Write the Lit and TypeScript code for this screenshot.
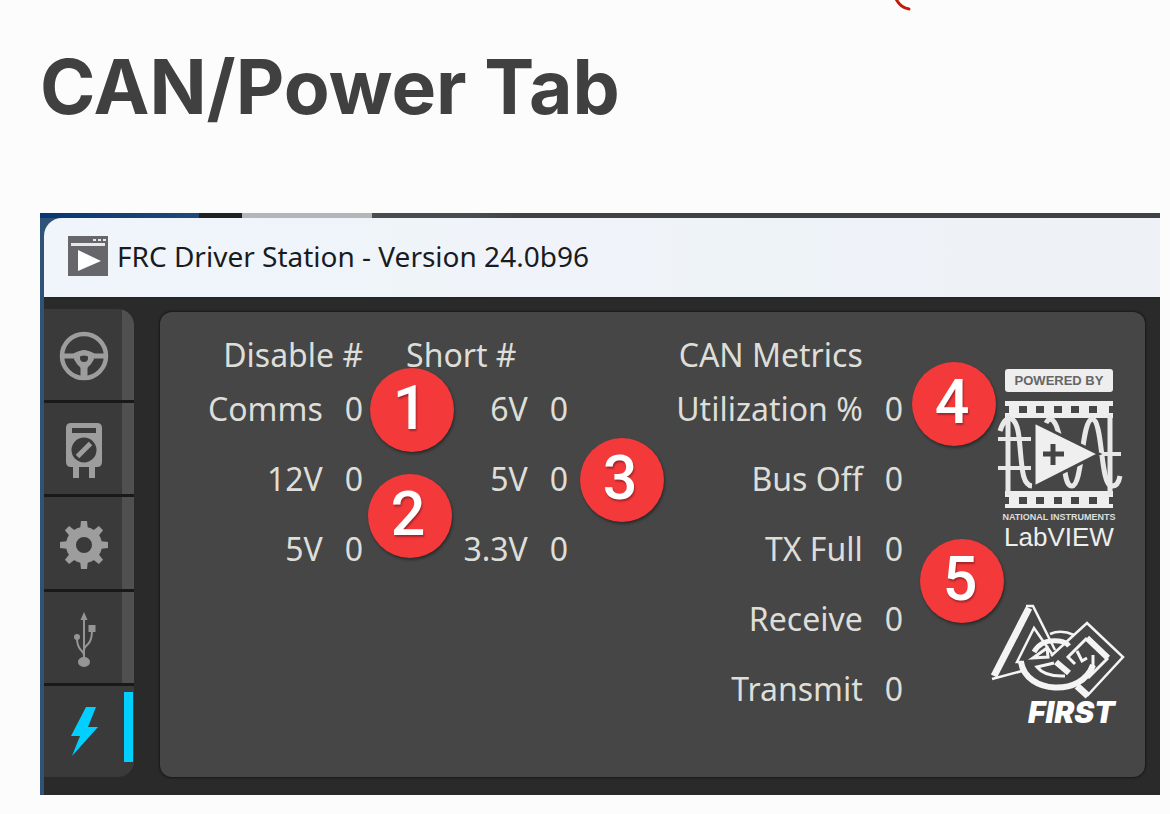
import { LitElement, html, css, svg } from "lit";
import { customElement } from "lit/decorators.js";

type Row = [string, number];

const disableRows: Row[] = [["Comms", 0], ["12V", 0], ["5V", 0]];
const shortRows: Row[] = [["6V", 0], ["5V", 0], ["3.3V", 0]];
const canRows: Row[] = [["Utilization %", 0], ["Bus Off", 0], ["TX Full", 0], ["Receive", 0], ["Transmit", 0]];

const gearTeeth = [0, 45, 90, 135, 180, 225, 270, 315];
const filmHoles = [18, 35, 53, 70, 88];

const tabs = [
  {
    name: "Operation",
    icon: svg`<g fill="none" stroke="#9d9d9d">
      <circle cx="25" cy="28" r="22" stroke-width="4.5"/>
      <circle cx="25" cy="30" r="6" stroke-width="4"/>
      <path d="M4 28H15Q25 22 35 28H46" stroke-width="5"/>
      <path d="M25 36V48" stroke-width="7"/>
      <path d="M16 30Q19 36 23 39M34 30Q31 36 27 39" stroke-width="3"/></g>`,
  },
  {
    name: "Diagnostics",
    icon: svg`<path fill="#9d9d9d" fill-rule="evenodd" d="M12 1H38Q43 1 43 6V40Q43 45 38 45H36V56H30V45H20V56H14V45H12Q7 45 7 40V6Q7 1 12 1ZM13 6V11H37V6ZM25 15.500A12.500 12.500 0 1 0 25 40.500A12.500 12.500 0 1 0 25 15.500Z"/>
      <path d="M18.500 34.500L31.500 21.500" stroke="#9d9d9d" stroke-width="5"/>`,
  },
  {
    name: "Setup",
    icon: svg`<circle cx="25" cy="28" r="13" fill="none" stroke="#9d9d9d" stroke-width="10"/>
      ${gearTeeth.map((a) => svg`<path d="M21 13L22 4H28L29 13Z" fill="#9d9d9d" transform="rotate(${a} 25 28)"/>`)}`,
  },
  {
    name: "USB Devices",
    icon: svg`<g fill="none" stroke="#959595" stroke-width="2"><path d="M25 50V7"/><path d="M25 45C25 38 18 41 18 27M25 39C25 33 33 36 33 19"/></g>
      <g fill="#959595"><path d="M25 1L28.500 9H21.500Z"/><ellipse cx="25" cy="51" rx="6" ry="5"/><circle cx="18" cy="26" r="3"/><path d="M29.500 14H36.500V21H29.500Z"/></g>`,
  },
  {
    name: "CAN/Power",
    icon: svg`<path fill="#00cfff" d="M27 2H37L29 22H39L13 51L21 31H12Z"/>`,
  },
];

@customElement("app-root")
export class AppRoot extends LitElement {
  static styles = css`
    :host { display: block; min-height: 100vh; box-sizing: border-box; padding: 40px 10px 19px 40px; background: #fcfcfc; position: relative; overflow: hidden; }
    h1 { margin: 0 0 80px; font: 700 75px/93px Inter, sans-serif; color: #404040; }
    .mark { position: absolute; top: 0; left: 894px; width: 20px; height: 12px; }
    .window { background: linear-gradient(90deg, #2e5378, #2b2b2b); padding-left: 4px; }
    .behind { height: 5px; margin-left: -4px; background: linear-gradient(90deg, #083672 0, #1d4a78 159px, #202020 159px 202px, #b4b7ba 202px 332px, #4a4d4f 332px 430px, #404244 480px); }
    .titlebar { display: flex; align-items: center; gap: 9px; height: 79px; box-sizing: border-box; padding: 0 24px 4px; background: linear-gradient(90deg, #f0f5fb, #eef2f7); border-radius: 18px 0 0 0; font: 400 28px/38px "Noto Sans", sans-serif; color: #191b1e; white-space: nowrap; }
    .appicon { width: 40px; height: 40px; flex: none; }
    .body { display: flex; gap: 26px; padding: 10px 15px 18px 0; background: #2a2a2a; border-top: 2px solid #242628; }
    .tabs { display: flex; flex-direction: column; gap: 3px; flex: none; width: 90px; background: #191919; border-radius: 0 16px 16px 0; overflow: hidden; }
    .tab { flex: 1; display: flex; align-items: center; border: 0; margin: 0; padding: 5px 0 0 15px; background: #3a3a3a; border-right: 12px solid #505050; }
    .tab svg { width: 50px; height: 58px; }
    .active { border-right-color: #3a3a3a; position: relative; }
    .active::after { content: ""; position: absolute; right: -11px; top: 6px; bottom: 15px; width: 9px; background: #00cfff; }
    .panel { flex: 1; position: relative; display: flex; align-items: flex-start; box-sizing: border-box; min-height: 465px; margin-top: 3px; padding: 24px 18px 24px 48px; background: #464646; border-radius: 12px; box-shadow: 0 0 2px 1px #181818; }
    table { border-collapse: collapse; flex: none; font: 400 32px/38px "Noto Sans", sans-serif; color: #deded9; }
    th, td { padding: 0; font-weight: 400; text-align: right; white-space: nowrap; height: 70px; }
    thead th { height: 38px; }
    td { padding-left: 22px; width: 18px; }
    .disable { width: 155px; margin-right: 43px; }
    .short { width: 162px; margin-right: 101px; }
    .short thead th { text-align: left; }
    .can { width: 234px; }
    .logos { display: flex; flex-direction: column; gap: 49px; margin: 29px 0 0 auto; flex: none; width: 138px; }
    .logos svg { display: block; width: 138px; }
    .badge { position: absolute; width: 84px; height: 84px; border-radius: 50%; background: #f4393b; box-shadow: 1px 2px 3px #0006; color: #fff; font: 500 61px/80px Roboto, sans-serif; text-align: center; text-indent: -4px; text-shadow: 1px 2px 2px #0005; }
    .b1 { left: 210px; top: 56px; }
    .b2 { left: 208px; top: 162px; }
    .b3 { left: 420px; top: 126px; }
    .b4 { left: 752px; top: 50px; }
    .b5 { left: 760px; top: 227px; }
    .powered { font: 700 13px "Liberation Sans", sans-serif; }
    .maker { font: 700 9px "Liberation Sans", sans-serif; }
    .product { font: 400 26px "Liberation Sans", sans-serif; }
    .first { font: italic 900 30px Inter, sans-serif; }
  `;

  private metrics(name: string, title: string, rows: Row[], span: number) {
    return html`<table class=${name}>
      <thead><tr><th scope="col" colspan=${span}>${title}</th></tr></thead>
      <tbody>${rows.map(([label, value]) => html`<tr><th scope="row">${label}</th><td>${value}</td></tr>`)}</tbody>
    </table>`;
  }

  render() {
    return html`
      <svg class="mark" viewBox="0 0 20 12" aria-hidden="true"><path d="M1-3Q6 8 15 9" fill="none" stroke="#c41a0c" stroke-width="3" stroke-linecap="round"/></svg>
      <h1>CAN/Power Tab</h1>
      <section class="window">
        <div class="behind"></div>
        <header class="titlebar">
          <svg class="appicon" viewBox="0 0 40 40" aria-hidden="true"><path d="M0 0H40V40H0Z" fill="#67676b"/><path d="M3 7H37V10H3ZM25 3H28V5H25ZM30 3H33V5H30ZM35 3H38V5H35Z" fill="#e8e8ec"/><path d="M10 14L33 25L10 35Z" fill="#fff"/></svg>
          <span>FRC Driver Station - Version 24.0b96</span>
        </header>
        <div class="body">
          <nav class="tabs">
            ${tabs.map((t, i) => html`<button class="tab ${i === 4 ? "active" : ""}" aria-label=${t.name}><svg viewBox="0 0 50 58" aria-hidden="true">${t.icon}</svg></button>`)}
          </nav>
          <main class="panel">
            ${this.metrics("disable", "Disable #", disableRows, 2)}
            ${this.metrics("short", "Short #", shortRows, 2)}
            ${this.metrics("can", "CAN Metrics", canRows, 1)}
            <div class="logos">
              <svg viewBox="0 0 138 186" role="img" aria-label="Powered by LabVIEW">
                <rect x="16" y="4" width="108" height="23" rx="3" fill="#eee"/>
                <text class="powered" x="70" y="20" text-anchor="middle" fill="#666">POWERED BY</text>
                <path d="M16 36H124V53H16ZM16 126H124V143H16Z" fill="#eee"/>
                ${filmHoles.map((x) => svg`<path d="M${x + 12} 41h8v7h-8zM${x + 12} 132h8v7h-8z" fill="#464646"/>`)}
                <path d="M16 41h4v7h-4zM120 41h4v7h-4zM16 132h4v7h-4zM120 132h4v7h-4z" fill="#464646"/>
                <g fill="none" stroke="#e8e8e8" stroke-width="5">
                  <path d="M19 50V130M121 50V130"/>
                  <path d="M11 66C16 50 27 47 30 72C33 98 32 120 43 121M57 58C61 50 67 54 71 74C76 98 75 122 83 121C94 120 92 56 103 54C114 54 111 119 122 121Q129 122 131 111"/>
                  <path d="M9 74H42M9 103H42M108 89H132" stroke-width="4"/>
                </g>
                <path d="M45 57L110 89L45 122Z" fill="#efefef" stroke="#464646" stroke-width="3"/>
                <path d="M64 79V100M54 89H75" stroke="#444" stroke-width="5"/>
                <text class="maker" x="70" y="155" text-anchor="middle" fill="#ddd">NATIONAL INSTRUMENTS</text>
                <text class="product" x="70" y="181" text-anchor="middle" fill="#eee">LabVIEW</text>
              </svg>
              <svg viewBox="0 0 138 140" role="img" aria-label="FIRST">
                <g fill="none" stroke="#f4f4f4" stroke-width="2.5">
                  <path d="M40 8L5 76" stroke-width="7"/>
                  <path d="M37 6H44L66 50M3 79L33 71M62 56L98 23L134 57L98 96"/>
                  <path d="M35 62H28L45 28L63 54"/>
                  <path d="M61 34Q72 29 85 35"/>
                  <path d="M32 62C37 94 93 97 104 65" stroke-width="6"/>
                  <path d="M45 52Q52 39 70 41Q77 42 80 46" stroke-width="5"/>
                  <path d="M44 58L58 48L59 57Z" stroke-width="3"/>
                  <path d="M67 62L80 73" stroke-width="6"/>
                  <path d="M65 63L48 67Q56 77 76 76" stroke-width="3"/>
                  <path d="M98 38L119 58" stroke-width="6"/>
                  <path d="M98 38L79 57L86 64M119 58L99 78M88 51L93 61L98 58M104 55V66" stroke-width="3"/>
                  <path d="M88 86L99 96" stroke-width="7"/>
                </g>
                <text class="first" x="39" y="123" fill="#fff">FIRST</text>
              </svg>
            </div>
            <span class="badge b1">1</span><span class="badge b2">2</span><span class="badge b3">3</span><span class="badge b4">4</span><span class="badge b5">5</span>
          </main>
        </div>
      </section>
    `;
  }
}
